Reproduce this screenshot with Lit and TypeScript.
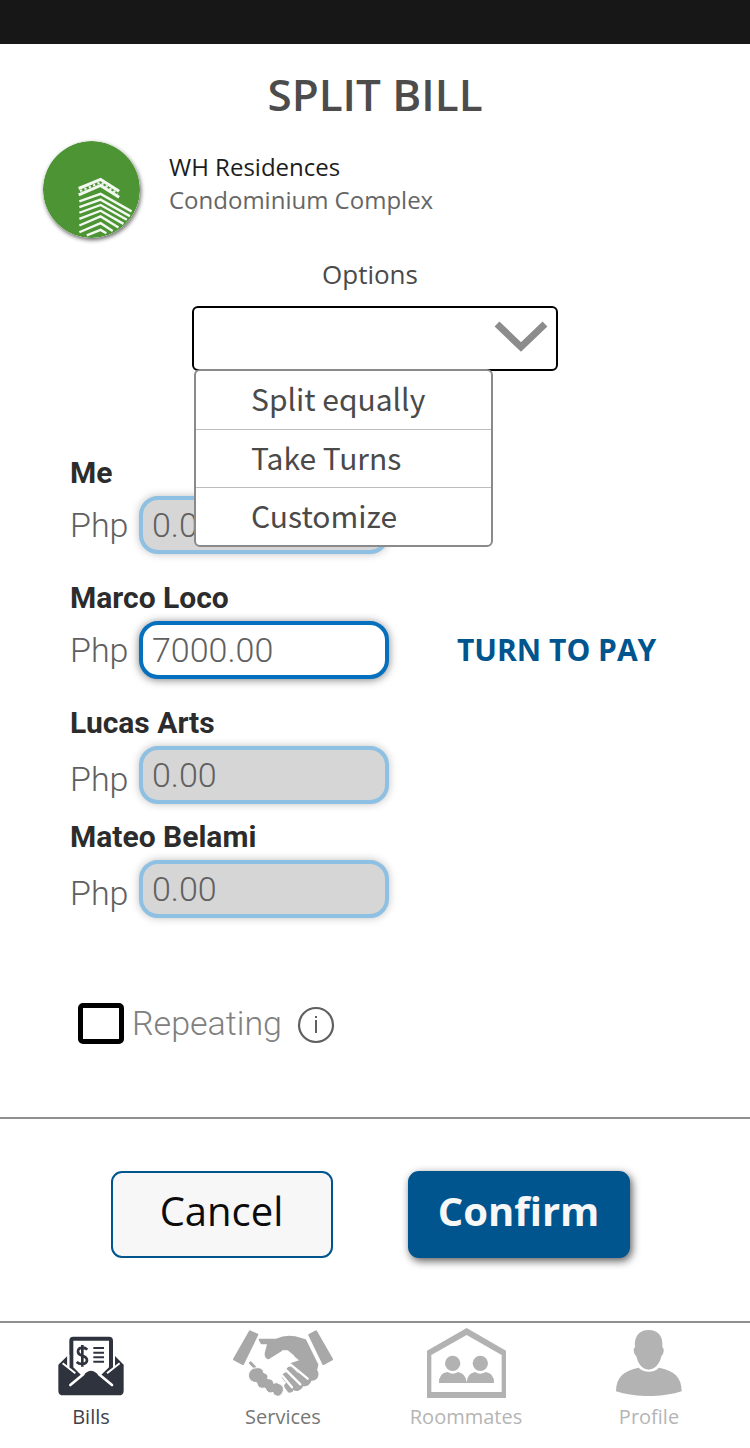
import { LitElement, html, css, svg } from "lit";
import { customElement, property, state } from "lit/decorators.js";
import { classMap } from "lit/directives/class-map.js";

const billsIcon = html`<svg width="66" height="60" viewBox="54 64 198 180" aria-hidden="true">
  <path fill="#2f333d" d="M82 124L55 150V228Q55 242 70 242H236Q251 242 251 228V150L225 124V150L207 166H100L82 150Z" />
  <path fill="#2f333d" d="M88 166V78Q88 66 100 66H207Q219 66 219 78V166Z" />
  <path fill="#fff" d="M100 78H207V158L180 184L168 174Q153 162 138 174L126 184L100 158Z" />
  <path fill="none" stroke="#fff" stroke-width="8" stroke-linecap="round" d="M91 211L130 179M216 211L177 179" />
  <path fill="none" stroke="#fff" stroke-width="6" d="M68 146L106 176M239 146L201 176M85 120V158M222 120V158" />
  <path fill="none" stroke="#2f333d" stroke-width="8" d="M142 105Q136 99 127 99Q114 100 114 111Q114 119 127 123Q141 127 141 137Q140 147 126 148Q116 148 110 142M127 91V156" />
  <path fill="none" stroke="#2f333d" stroke-width="6" d="M160 100H192M160 114H192M160 128H192M160 141H192" />
</svg>`;

const servicesIcon = html`<svg width="100" height="66" viewBox="42 46 300 198" aria-hidden="true">
  <g fill="#a8a8a8" stroke="#a8a8a8" stroke-width="6" stroke-linejoin="round">
    <path d="M93 50L115 60L72 148L45 134Z" />
    <path d="M291 50L339 134L313 148L271 61Z" />
    <path d="M122 75H172Q200 62 228 68L259 77L295 150L290 172L207 104H188Q180 134 152 133Q139 130 140 116L148 86H128Z" />
    <path d="M92 142L109 160" stroke-width="9" />
  </g>
  <g fill="none" stroke="#a8a8a8" stroke-width="23" stroke-linecap="round" stroke-linejoin="round">
    <path d="M232 132L286 174Q290 188 274 187L226 150" />
    <path d="M250 176L267 193Q264 207 250 202L212 168" />
    <path d="M232 192L243 209Q236 223 226 214L200 186" />
    <path d="M206 214L213 224" stroke-width="20" />
  </g>
  <path fill="none" stroke="#fff" stroke-width="7" stroke-linecap="round" d="M215 150L266 192M202 167L244 209M190 183L219 218" />
  <path fill="#fff" d="M190 108H206L240 137L214 146L198 168L186 186L182 204L150 186L134 160L120 152Z" />
  <path fill="#a8a8a8" stroke="#fff" stroke-width="3" d="M88 184Q90 159 115 159Q132 158 134 174Q150 178 146 192Q163 192 164 206Q172 200 184 209Q197 216 193 228Q188 244 176 245Q161 242 162 233Q147 240 138 220Q117 225 113 204Q92 203 88 184Z" />
</svg>`;

const roommatesIcon = html`<svg width="79" height="70" viewBox="78 42 237 210" aria-hidden="true">
  <path fill="#b2b2b2" fill-rule="evenodd" d="M197 42L315 110V252H78V110ZM197 63L91 123V234H302V123Z" />
  <circle cx="155" cy="148" r="23" fill="#b2b2b2" />
  <circle cx="238" cy="148" r="23" fill="#b2b2b2" />
  <path fill="#b2b2b2" d="M114 207Q113 177 140 174Q155 185 171 174Q195 179 197 205Q198 179 222 174Q238 185 254 174Q280 178 279 207Z" />
</svg>`;

const profileIcon = html`<svg width="66" height="66" viewBox="62 44 198 198" aria-hidden="true">
  <path fill="#b3b3b3" d="M160 44C190 44 204 64 201 96C208 100 206 115 198 123C193 149 175 163 160 163C145 163 128 149 123 123C115 115 112 100 119 96C116 64 130 44 160 44Z" />
  <path fill="#b3b3b3" d="M62 228C62 185 86 166 130 157C145 173 177 173 191 157C236 166 259 185 259 228Q212 243 160 242Q109 243 62 228Z" />
</svg>`;

const towerFloors = [
  { y: 190, x: 303, end: 242, left: 148, ly: 212 },
  { y: 207, x: 298, end: 256, left: 148, ly: 229 },
  { y: 223, x: 289, end: 267, left: 148, ly: 246 },
  { y: 240, x: 279, end: 279, left: 148, ly: 264 },
  { y: 257, x: 264, end: 290, left: 148, ly: 284 },
  { y: 277, x: 247, end: 300, left: 148, ly: 304 },
  { y: 297, x: 228, end: 307, left: 170, ly: 313 },
];

const residenceLogo = html`<svg class="logo" width="97" height="97" viewBox="40 33 288 288" aria-hidden="true">
  <circle cx="184" cy="177" r="144" fill="#4c9434" />
  <g fill="none" stroke="#f3f8f0">
    <path stroke-width="9" d="M146 174L211 147L266 182M146 193L211 165L266 200" />
    <path stroke-width="6" stroke-dasharray="7 7" d="M150 182L211 156L262 190" />
    ${towerFloors.map(
      (f) => svg`<path stroke-width="7" d=${`M${f.left} ${f.ly}L211 ${f.y}L${f.x} ${f.end}`} />`,
    )}
  </g>
</svg>`;

@customElement("share-row")
class ShareRow extends LitElement {
  @property() name = "";
  @property() amount = "0.00";
  @property({ type: Boolean }) active = false;
  @property({ type: Boolean }) low = false;

  static styles = css`
    :host {
      display: block;
    }
    .name {
      display: block;
      font: 700 30px/36px Roboto, sans-serif;
      color: #2c2c2c;
      margin-bottom: 5px;
    }
    .line {
      display: flex;
      align-items: center;
      gap: 12px;
      font: 300 34px/50px Roboto, sans-serif;
      color: #606060;
    }
    .low {
      align-items: flex-end;
    }
    .currency {
      flex: none;
      width: 57px;
    }
    .amount {
      box-sizing: border-box;
      width: 250px;
      height: 58px;
      padding: 0 9px;
      border: 4px solid #8dc0e2;
      border-radius: 19px;
      background: #d6d6d6;
      box-shadow: 0 0 8px rgba(0, 0, 0, 0.25);
      font: inherit;
      color: #606060;
      opacity: 1;
    }
    .active {
      border-color: #0570bd;
      background: #fff;
      box-shadow: 0 1px 9px rgba(0, 0, 0, 0.5);
    }
    .turn {
      margin-left: 56px;
      white-space: nowrap;
      font: 700 30px/40px "Open Sans", sans-serif;
      color: #00558f;
    }
  `;

  render() {
    return html`
      <label class="name" for="amount">${this.name}</label>
      <div class=${classMap({ line: true, low: this.low })}>
        <span class="currency">Php</span>
        <input
          id="amount"
          class=${classMap({ amount: true, active: this.active })}
          inputmode="decimal"
          .value=${this.amount}
          ?disabled=${!this.active}
        />
        ${this.active ? html`<span class="turn">TURN TO PAY</span>` : null}
      </div>
    `;
  }
}

@customElement("app-root")
class AppRoot extends LitElement {
  @state() private open = true;
  @state() private choice = "";

  private options = ["Split equally", "Take Turns", "Customize"];

  static styles = css`
    :host {
      display: block;
      background: #fff;
      font-family: "Open Sans", sans-serif;
      color: #4a4a4a;
    }
    * {
      box-sizing: border-box;
    }
    .status {
      height: 44px;
      background: #171717;
    }
    .title {
      margin: 20px 0 17px;
      text-align: center;
      font-size: 44px;
      font-weight: 600;
      line-height: 60px;
      color: #4c4c4c;
    }
    .org {
      display: flex;
      gap: 29px;
      padding: 0 43px;
    }
    .logo {
      flex: none;
      border-radius: 50%;
      box-shadow: 1px 2px 4px rgba(0, 0, 0, 0.6);
    }
    .org-text {
      padding-top: 9px;
      font-size: 24px;
      line-height: 33px;
      color: #666;
    }
    .org-name {
      margin: 0;
      font: inherit;
      color: #1c1c1c;
    }
    .org-kind {
      margin: 0;
    }
    .options {
      display: flex;
      flex-direction: column;
      align-items: center;
      margin-top: 18px;
    }
    .options-label {
      font-size: 26px;
      line-height: 36px;
      padding-right: 10px;
      margin-bottom: 14px;
    }
    .picker {
      position: relative;
      width: 366px;
    }
    .select {
      display: block;
      appearance: none;
      width: 100%;
      height: 65px;
      padding: 0 70px 0 16px;
      border: 2px solid #000;
      border-radius: 6px;
      background: #fff;
      font: 26px "Open Sans", sans-serif;
      color: #4a4a4a;
    }
    .chevron {
      position: absolute;
      top: 15px;
      right: 10px;
      pointer-events: none;
    }
    .menu {
      position: absolute;
      z-index: 1;
      top: 63px;
      left: 2px;
      width: 299px;
      border: 2px solid #8a8a8a;
      border-radius: 6px;
      background: #fff;
      overflow: hidden;
    }
    .item {
      display: block;
      width: 100%;
      height: 58px;
      padding: 0 0 4px 55px;
      border: 0;
      background: none;
      text-align: left;
      font: 30px/52px "Noto Sans CJK SC", "Noto Sans", sans-serif;
      color: #4a4a4a;
    }
    .item + .item {
      border-top: 1px solid #bdbdbd;
    }
    .shares {
      display: grid;
      gap: 26px;
      padding: 0 70px;
      margin-top: 84px;
    }
    .shares share-row:last-child {
      margin-top: -11px;
    }
    .repeat {
      display: flex;
      align-items: center;
      padding: 0 78px;
      margin: 80px 0 69px;
      font: 300 34px/50px Roboto, sans-serif;
      color: #808080;
    }
    .tick {
      appearance: none;
      width: 46px;
      height: 41px;
      margin: 0 8px 0 0;
      border: 5px solid #000;
      border-radius: 5px;
      background: #fff;
    }
    .info {
      display: flex;
      padding: 0;
      margin: 4px 0 0 15px;
      border: 0;
      background: none;
    }
    .actions {
      display: flex;
      justify-content: center;
      gap: 75px;
      padding: 52px 10px 63px 0;
      border-top: 2px solid #8f8f8f;
      border-bottom: 2px solid #8f8f8f;
    }
    .button {
      width: 222px;
      height: 87px;
      padding: 0 0 8px;
      border: 2px solid #00558f;
      border-radius: 11px;
      background: #f7f7f7;
      font: 400 40px/54px "Open Sans", sans-serif;
      color: #0c0c0c;
    }
    .primary {
      background: #00558f;
      box-shadow: 2px 3px 8px rgba(0, 0, 0, 0.65);
      font-weight: 700;
      color: #f7f7f7;
    }
    .nav {
      display: grid;
      grid-template-columns: 182fr 202fr 164fr 202fr;
      padding-bottom: 16px;
    }
    .tab {
      display: flex;
      flex-direction: column;
      align-items: center;
      text-decoration: none;
      font-size: 20px;
      line-height: 28px;
      color: #b5b5b5;
    }
    .glyph {
      display: flex;
      align-items: center;
      height: 80px;
    }
    .current {
      color: #3d424c;
    }
    .current .glyph {
      padding-top: 6px;
    }
    .mid {
      color: #777;
    }
  `;

  private pick(option: string) {
    this.choice = option;
    this.open = false;
  }

  render() {
    return html`
      <div class="status"></div>
      <main>
        <h1 class="title">SPLIT BILL</h1>
        <section class="org">
          ${residenceLogo}
          <div class="org-text">
            <h2 class="org-name">WH Residences</h2>
            <p class="org-kind">Condominium Complex</p>
          </div>
        </section>

        <section class="options">
          <label class="options-label" for="mode">Options</label>
          <div class="picker">
            <select
              id="mode"
              class="select"
              .value=${this.choice}
              @mousedown=${(e: Event) => {
                e.preventDefault();
                this.open = !this.open;
              }}
            >
              <option value=""></option>
              ${this.options.map(
                (o) => html`<option value=${o} ?selected=${o === this.choice}>${o}</option>`,
              )}
            </select>
            <svg class="chevron" width="54" height="32" viewBox="0 0 54 32" aria-hidden="true">
              <path fill="none" stroke="#8c8c8c" stroke-width="7" d="M3 3L27 26L51 3" />
            </svg>
            ${this.open
              ? html`<div class="menu">
                  ${this.options.map(
                    (o) => html`<button class="item" type="button" @click=${() => this.pick(o)}>${o}</button>`,
                  )}
                </div>`
              : null}
          </div>
        </section>

        <section class="shares">
          <share-row name="Me"></share-row>
          <share-row name="Marco Loco" amount="7000.00" active></share-row>
          <share-row name="Lucas Arts" low></share-row>
          <share-row name="Mateo Belami" low></share-row>
        </section>

        <div class="repeat">
          <input class="tick" type="checkbox" id="repeat" />
          <label for="repeat">Repeating</label>
          <button class="info" type="button" aria-label="About repeating">
            <svg width="38" height="38" viewBox="0 0 38 38" aria-hidden="true">
              <circle cx="19" cy="19" r="17" fill="none" stroke="#606060" stroke-width="2.2" />
              <path fill="none" stroke="#606060" stroke-width="2" d="M19 14V27M19 10V12" />
            </svg>
          </button>
        </div>

        <div class="actions">
          <button class="button" type="button">Cancel</button>
          <button class="button primary" type="button">Confirm</button>
        </div>
      </main>
      <nav class="nav">
        <a class="tab current" href="#bills"><span class="glyph">${billsIcon}</span>Bills</a>
        <a class="tab mid" href="#services"><span class="glyph">${servicesIcon}</span>Services</a>
        <a class="tab" href="#roommates"><span class="glyph">${roommatesIcon}</span>Roommates</a>
        <a class="tab" href="#profile"><span class="glyph">${profileIcon}</span>Profile</a>
      </nav>
    `;
  }
}
